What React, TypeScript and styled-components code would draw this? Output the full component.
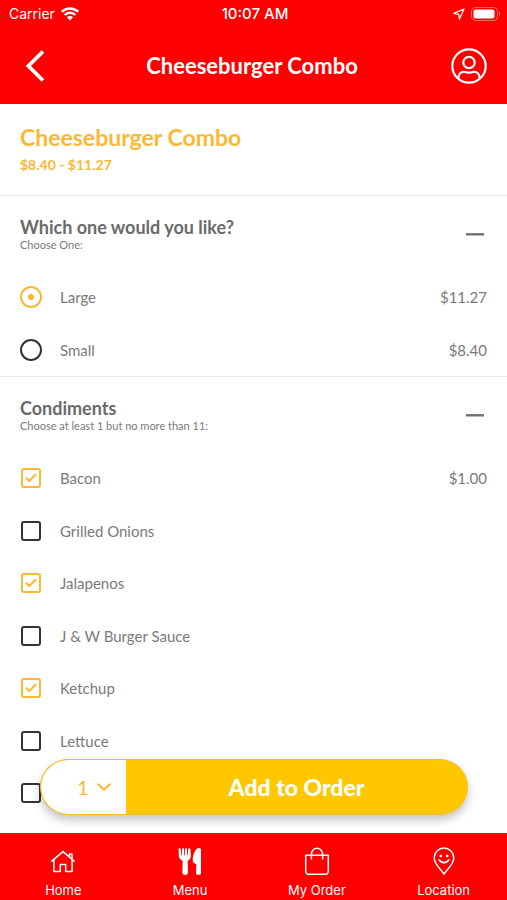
import React, { useState } from "react";
import styled, { createGlobalStyle } from "styled-components";

const RED = "#ff0000";
const AMBER = "#fbb832";
const GOLD = "#ffc700";
const INK = "#333333";
const GREY = "#7a7a7a";
const BODY_FONT = 'Lato, "Open Sans", sans-serif';
const SYSTEM_FONT = 'Inter, "Liberation Sans", sans-serif';

const GlobalStyle = createGlobalStyle`
  *, *::before, *::after { box-sizing: border-box; }
  body { margin: 0; background: #ffffff; font-family: ${BODY_FONT}; color: ${GREY}; }
  button, input, select { font: inherit; color: inherit; margin: 0; }
  h1, h2, p { margin: 0; }
`;

const Screen = styled.div`
  display: flex;
  flex-direction: column;
  height: 100vh;
`;

const Header = styled.header`
  flex: none;
  background: ${RED};
  color: #ffffff;
`;

const StatusBar = styled.div`
  display: grid;
  grid-template-columns: 1fr auto 1fr;
  align-items: center;
  height: 28px;
  padding: 0 6px 0 9px;
  font-family: ${SYSTEM_FONT};
  font-size: 14px;
  line-height: 20px;
`;

const StatusGroup = styled.div<{ $end?: boolean }>`
  display: flex;
  align-items: center;
  gap: 6px;
  justify-content: ${(p) => (p.$end ? "flex-end" : "flex-start")};
`;

const Clock = styled.time`
  font-size: 15px;
  font-weight: 500;
`;

const NavBar = styled.div`
  display: flex;
  align-items: center;
  justify-content: space-between;
  height: 76px;
  padding: 0 18px 0 15px;
`;

const IconButton = styled.button`
  display: flex;
  align-items: center;
  justify-content: center;
  width: 40px;
  height: 40px;
  padding: 0;
  border: 0;
  background: none;
  cursor: pointer;
`;

const NavTitle = styled.div`
  font-size: 22px;
  font-weight: 700;
  line-height: 32px;
`;

const Content = styled.main`
  flex: 1;
  min-height: 0;
  overflow-y: auto;
  scrollbar-width: none;
`;

const Intro = styled.section`
  display: flex;
  flex-direction: column;
  gap: 2px;
  padding: 17px 20px 20px;
  border-bottom: 1px solid #e8e8e8;
  color: ${AMBER};
  font-weight: 700;
`;

const ItemName = styled.h1`
  font-size: 23px;
  font-weight: 700;
  line-height: 32px;
`;

const PriceRange = styled.p`
  font-size: 14px;
  line-height: 20px;
`;

const Group = styled.section`
  & + & {
    border-top: 1px solid #e8e8e8;
  }
`;

const GroupHeader = styled.div`
  display: flex;
  align-items: center;
  justify-content: space-between;
  padding: 20px 12px 19px 20px;
`;

const GroupTitle = styled.h2`
  color: #6a6a6a;
  font-size: 18px;
  font-weight: 700;
  line-height: 22px;
`;

const GroupHint = styled.p`
  font-size: 11px;
  line-height: 14px;
`;

const CollapseButton = styled(IconButton)`
  height: 36px;
`;

const Option = styled.label`
  display: flex;
  align-items: center;
  gap: 18px;
  padding: 15px 20px;
  font-size: 15px;
  line-height: 1.5;
  cursor: pointer;
`;

const OptionPrice = styled.span`
  margin-left: auto;
`;

const Mark = styled.span`
  display: grid;
  place-items: center;
  flex: none;
  width: 22px;
  height: 22px;

  & > * {
    grid-area: 1 / 1;
  }
`;

const Radio = styled.input`
  appearance: none;
  display: grid;
  place-items: center;
  width: 22px;
  height: 22px;
  border: 2px solid ${INK};
  border-radius: 50%;

  &:checked {
    border-color: ${AMBER};
  }
  &:checked::before {
    content: "";
    width: 6px;
    height: 6px;
    border-radius: 50%;
    background: ${AMBER};
  }
`;

const Checkbox = styled.input`
  appearance: none;
  width: 20px;
  height: 20px;
  border: 2px solid ${INK};
  border-radius: 3px;

  &:checked {
    border-color: ${AMBER};
  }
`;

const Tick = styled.svg`
  pointer-events: none;
`;

const OrderBar = styled.form`
  position: fixed;
  left: 40px;
  right: 39px;
  bottom: 85px;
  display: flex;
  height: 56px;
  border: 1px solid ${AMBER};
  border-right-color: ${GOLD};
  border-radius: 28px;
  background: ${GOLD};
  overflow: hidden;
  box-shadow: 0 5px 10px rgba(0, 0, 0, 0.24);
`;

const QuantityBox = styled.div`
  display: grid;
  align-items: center;
  width: 85px;
  flex: none;
  border-radius: 27px 0 0 27px;
  background: #ffffff;
  color: ${AMBER};

  & > * {
    grid-area: 1 / 1;
  }
  & > svg {
    justify-self: end;
    margin-right: 15px;
    pointer-events: none;
  }
`;

const QuantitySelect = styled.select`
  appearance: none;
  width: 100%;
  height: 100%;
  padding: 0 0 0 36px;
  border: 0;
  background: none;
  font-size: 20px;
`;

const AddButton = styled.button`
  flex: 1;
  padding: 0;
  border: 0;
  background: ${GOLD};
  color: #ffffff;
  font-size: 23px;
  font-weight: 900;
  cursor: pointer;
`;

const TabBar = styled.nav`
  flex: none;
  display: grid;
  grid-template-columns: repeat(4, 1fr);
  height: 67px;
  background: ${RED};
`;

const Tab = styled.a`
  display: flex;
  flex-direction: column;
  align-items: center;
  gap: 5px;
  padding-top: 14px;
  color: #ffffff;
  font-family: ${SYSTEM_FONT};
  font-size: 13px;
  line-height: 20px;
  text-decoration: none;
`;

const WifiIcon = () => (
  <svg width="18" height="14" viewBox="0 0 18 14" fill="none" stroke="#fff" strokeWidth="2.4" aria-hidden="true">
    <path d="M.8 4.9a11.6 11.6 0 0 1 16.4 0" />
    <path d="M3.7 8a7.5 7.5 0 0 1 10.6 0" />
    <path d="M9 13.5 5.9 10.3a4.4 4.4 0 0 1 6.2 0z" fill="#fff" stroke="none" />
  </svg>
);

const LocationArrow = () => (
  <svg width="12" height="12" viewBox="0 0 12 12" fill="none" stroke="#fff" strokeWidth="1.2" strokeLinejoin="round" aria-hidden="true">
    <path d="M11 1 .9 5.4l4.8.9.8 4.8z" />
  </svg>
);

const BatteryIcon = () => (
  <svg width="30" height="14" viewBox="0 0 30 14" aria-hidden="true">
    <rect x=".5" y=".5" width="26" height="13" rx="4" fill="none" stroke="#fff" strokeOpacity=".4" />
    <rect x="2.500" y="2.500" width="21" height="9" rx="2" fill="#fff" />
    <path d="M28 4.8c1.6.6 1.6 3.8 0 4.4z" fill="#fff" fillOpacity=".45" />
  </svg>
);

const BackIcon = () => (
  <svg width="20" height="32" viewBox="0 0 20 32" fill="none" stroke="#fff" strokeWidth="3.8" aria-hidden="true">
    <path d="M18 1.500 3.400 16 18 30.500" />
  </svg>
);

const UserIcon = () => (
  <svg width="36" height="36" viewBox="0 0 36 36" fill="none" stroke="#fff" strokeWidth="2.2" aria-hidden="true">
    <circle cx="18" cy="18" r="16.700" />
    <circle cx="18" cy="14.500" r="5.700" />
    <path d="M7.500 31v-1.200c0-3.600 2.200-6 5.400-6 1.700 0 2.800.9 5.100.9s3.400-.9 5.100-.9c3.200 0 5.400 2.400 5.400 6V31" />
  </svg>
);

const MinusIcon = () => (
  <svg width="18" height="3" viewBox="0 0 18 3" aria-hidden="true">
    <path d="M0 1.300h18" stroke="#707070" strokeWidth="2.400" />
  </svg>
);

const HomeIcon = () => (
  <svg width="26" height="28" viewBox="0 0 26 28" fill="none" stroke="#fff" strokeWidth="1.500" strokeLinecap="round" strokeLinejoin="round" aria-hidden="true">
    <path d="M1.800 14.100 13 4.600l11.200 9.500" />
    <path d="M3.900 12.600V24.400h6.400v-6.800h5.400v6.800h6.400V12.600" />
    <path d="M19.400 9.600V7h2.600v4.800" />
  </svg>
);

const UtensilsIcon = () => (
  <svg width="26" height="28" viewBox="0 0 26 28" fill="#fff" aria-hidden="true">
    <path d="M2.600 1.200c.9 0 1.100.4 1.200 1.200l.5 6h.5l.2-6.200c0-.7.4-1 1-1s1 .3 1 1l.2 6.200h.6L8 2.200c0-.7.4-1 1-1s1 .3 1 1l.2 6.200h.5l.5-6c.1-.8.4-1.200 1-1.200.8 0 1.100.4 1.200 1.200l.4 6.400c.1 2.700-1.200 4.300-3.100 5l.3 11.800c0 1.500-.9 2.400-2.800 2.400s-2.800-.9-2.800-2.400l.3-11.800C3.400 13.100 2.100 11.500 1.800 8.800L1.600 2.400c0-.8.3-1.200 1-1.200z" />
    <path d="M22.200 1c1.200 0 1.800.7 1.800 1.800v23c0 1.400-.9 2.200-2.500 2.200S19 27.200 19 25.800l.3-8.600c-2.200-.6-3.600-1.900-3.600-3.900C15.700 7.600 18.400 1 22.200 1z" />
  </svg>
);

const BagIcon = () => (
  <svg width="26" height="28" viewBox="0 0 26 28" fill="none" stroke="#fff" strokeWidth="1.500" strokeLinecap="round" strokeLinejoin="round" aria-hidden="true">
    <path d="M1.700 8.200h22.600V24.300a3 3 0 0 1-3 3H4.700a3 3 0 0 1-3-3z" />
    <path d="M7.400 12V7.200a5.600 5.900 0 0 1 11.200 0V12" />
  </svg>
);

const PinIcon = () => (
  <svg width="26" height="28" viewBox="0 0 26 28" fill="none" stroke="#fff" strokeWidth="1.500" strokeLinecap="round" strokeLinejoin="round" aria-hidden="true">
    <path d="M13 27.200C10.200 22.300 3.200 17.500 3.200 10.900a9.800 9.800 0 0 1 19.600 0C22.800 17.500 15.800 22.300 13 27.200z" />
    <path d="M8.200 12.900c1.800 3.500 7.800 3.500 9.600 0" strokeWidth="1.800" />
    <circle cx="9.800" cy="9" r="1.300" fill="#fff" stroke="none" />
    <circle cx="16.200" cy="9" r="1.300" fill="#fff" stroke="none" />
  </svg>
);

const sizes = [
  { name: "Large", price: "$11.27" },
  { name: "Small", price: "$8.40" },
];

const condiments = [
  { id: "bacon", name: "Bacon", price: "$1.00" },
  { id: "onions", name: "Grilled Onions" },
  { id: "jalapenos", name: "Jalapenos" },
  { id: "sauce", name: "J & W Burger Sauce" },
  { id: "ketchup", name: "Ketchup" },
  { id: "lettuce", name: "Lettuce" },
  { id: "more", name: "" },
];

const tabs = [
  { label: "Home", Icon: HomeIcon },
  { label: "Menu", Icon: UtensilsIcon },
  { label: "My Order", Icon: BagIcon },
  { label: "Location", Icon: PinIcon },
];

type OptionGroupProps = { title: string; hint: string; children: React.ReactNode };

function OptionGroup({ title, hint, children }: OptionGroupProps) {
  const [open, setOpen] = useState(true);
  return (
    <Group aria-label={title}>
      <GroupHeader>
        <div>
          <GroupTitle>{title}</GroupTitle>
          <GroupHint>{hint}</GroupHint>
        </div>
        <CollapseButton type="button" aria-label={`Toggle ${title}`} aria-expanded={open} onClick={() => setOpen(!open)}>
          <MinusIcon />
        </CollapseButton>
      </GroupHeader>
      {open && children}
    </Group>
  );
}

export default function App() {
  const [size, setSize] = useState("Large");
  const [picked, setPicked] = useState(["bacon", "jalapenos", "ketchup"]);
  const toggle = (id: string) =>
    setPicked((list) => (list.includes(id) ? list.filter((x) => x !== id) : [...list, id]));

  return (
    <Screen>
      <GlobalStyle />
      <Header>
        <StatusBar>
          <StatusGroup>
            <span>Carrier</span>
            <WifiIcon />
          </StatusGroup>
          <Clock>10:07 AM</Clock>
          <StatusGroup $end>
            <LocationArrow />
            <BatteryIcon />
          </StatusGroup>
        </StatusBar>
        <NavBar>
          <IconButton type="button" aria-label="Back">
            <BackIcon />
          </IconButton>
          <NavTitle>Cheeseburger Combo</NavTitle>
          <IconButton type="button" aria-label="Account">
            <UserIcon />
          </IconButton>
        </NavBar>
      </Header>

      <Content>
        <Intro>
          <ItemName>Cheeseburger Combo</ItemName>
          <PriceRange>$8.40 - $11.27</PriceRange>
        </Intro>

        <OptionGroup title="Which one would you like?" hint="Choose One:">
          {sizes.map((s) => (
            <Option key={s.name}>
              <Mark>
                <Radio type="radio" name="size" checked={size === s.name} onChange={() => setSize(s.name)} />
              </Mark>
              <span>{s.name}</span>
              <OptionPrice>{s.price}</OptionPrice>
            </Option>
          ))}
        </OptionGroup>

        <OptionGroup title="Condiments" hint="Choose at least 1 but no more than 11:">
          {condiments.map((c) => (
            <Option key={c.id}>
              <Mark>
                <Checkbox
                  type="checkbox"
                  aria-label={c.name || "More condiments"}
                  checked={picked.includes(c.id)}
                  onChange={() => toggle(c.id)}
                />
                {picked.includes(c.id) && (
                  <Tick width="12" height="10" viewBox="0 0 12 10" fill="none" stroke={AMBER} strokeWidth="2" aria-hidden="true">
                    <path d="M1 4.800 4.300 8 11 1.300" />
                  </Tick>
                )}
              </Mark>
              {/* A no-break space keeps unnamed rows at full height */}
              <span>{c.name || "\u00a0"}</span>
              {c.price && <OptionPrice>{c.price}</OptionPrice>}
            </Option>
          ))}
        </OptionGroup>
      </Content>

      <OrderBar onSubmit={(e) => e.preventDefault()}>
        <QuantityBox>
          <QuantitySelect aria-label="Quantity" defaultValue="1">
            <option>1</option>
            <option>2</option>
            <option>3</option>
          </QuantitySelect>
          <svg width="14" height="8" viewBox="0 0 14 8" fill="none" stroke={AMBER} strokeWidth="2" strokeLinecap="round" strokeLinejoin="round" aria-hidden="true">
            <path d="m1.200 1.200 5.800 5.600 5.800-5.600" />
          </svg>
        </QuantityBox>
        <AddButton type="submit">Add to Order</AddButton>
      </OrderBar>

      <TabBar aria-label="Main">
        {tabs.map(({ label, Icon }) => (
          <Tab key={label} href="#">
            <Icon />
            <span>{label}</span>
          </Tab>
        ))}
      </TabBar>
    </Screen>
  );
}
